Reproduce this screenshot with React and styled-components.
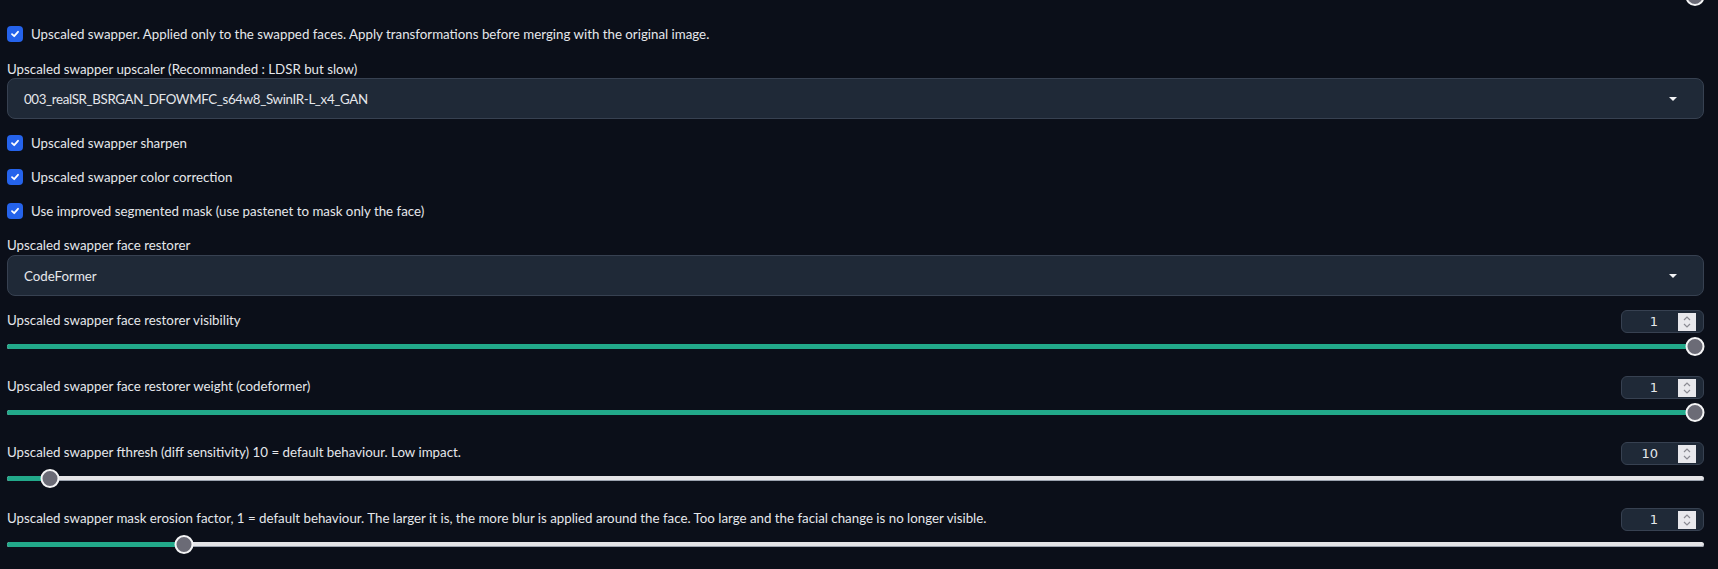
import React from 'react'
import styled, {createGlobalStyle} from 'styled-components'

const GlobalStyle = createGlobalStyle`
    html, body {
        margin: 0;
        padding: 0;
        background: #0b0f19;
    }
    body {
        font-family: Lato, "Liberation Sans", sans-serif;
        font-size: 13.3px;
        color: #e5e7eb;
        overflow: hidden;
    }
`

const Page = styled.div`
    display: flex;
    flex-direction: column;
    padding: 0 14px 0 7px;
    height: 569px;
    overflow: hidden;
`

const CheckRow = styled.label`
    display: flex;
    align-items: center;
    gap: 8px;
    height: 16px;
    margin-top: ${props => props.top}px;
    line-height: 16px;
`

const CheckBox = styled.span`
    width: 16px;
    height: 16px;
    border-radius: 4px;
    background: #2563eb;
    display: flex;
    align-items: center;
    justify-content: center;
    flex-shrink: 0;
`

const FieldLabel = styled.div`
    line-height: 18px;
    height: 18px;
    margin-top: ${props => props.top}px;
    color: #e5e7eb;
`

const Dropdown = styled.div`
    display: flex;
    align-items: center;
    justify-content: space-between;
    box-sizing: border-box;
    height: 41px;
    margin-top: ${props => props.top}px;
    padding: 0 26px 0 16px;
    background: #1f2937;
    border: 1px solid #374151;
    border-radius: 8px;
`

const DropdownValue = styled.span`
    letter-spacing: ${props => props.tight ? '-0.35px' : 'normal'};
`

const Caret = styled.span`
    width: 0;
    height: 0;
    border-left: 4px solid transparent;
    border-right: 4px solid transparent;
    border-top: 4px solid #f3f4f6;
`

const SliderBlock = styled.div`
    display: flex;
    flex-direction: column;
    margin-top: ${props => props.top}px;
`

const SliderHead = styled.div`
    display: flex;
    align-items: center;
    justify-content: space-between;
    height: 23px;
    margin-bottom: 4px;
`

const SliderTitle = styled.span`
    margin-top: -3px;
`

const NumberBox = styled.div`
    display: flex;
    align-items: center;
    justify-content: flex-end;
    box-sizing: border-box;
    width: 83px;
    height: 23px;
    padding: 0 7px 0 0;
    background: #1f2937;
    border: 1px solid #374151;
    border-radius: 6px;
`

const NumberValue = styled.span`
    font-family: "DejaVu Sans", sans-serif;
    font-size: 13px;
    color: #e5e7eb;
    margin-right: 20px;
`

const Spinner = styled.span`
    width: 18px;
    height: 18px;
    background: #e8e8ec;
    display: flex;
    align-items: center;
    justify-content: center;
`

const TrackArea = styled.div`
    position: relative;
    height: 19px;
    margin-top: ${props => props.top || 0}px;
`

const Track = styled.div`
    position: absolute;
    left: 0;
    right: 0;
    top: 7px;
    height: 5px;
    border-radius: 3px;
    background: #e4e4e7;
    box-shadow: inset 0 -1px 0 #9ca3af;
`

const Fill = styled.div`
    position: absolute;
    left: 0;
    top: 7px;
    height: 5px;
    border-radius: 3px;
    background: #22a98a;
`

const Thumb = styled.div`
    position: absolute;
    top: 0;
    width: 19px;
    height: 19px;
    box-sizing: border-box;
    border-radius: 50%;
    background: #6b6b76;
    border: 2px solid #f4f4f5;
    transform: translateX(-50%);
`

const Check = () => (
    <CheckBox>
        <svg width="10" height="10" viewBox="0 0 10 10">
            <path d="M2 5.2 L4.2 7.2 L8 2.8" fill="none" stroke="#fff" strokeWidth="1.8" strokeLinecap="round" strokeLinejoin="round"/>
        </svg>
    </CheckBox>
)

const Slider = ({pct, top}) => {
    // thumb centre runs from r to width - r, like a native range input
    const pos = `calc(9.5px + (100% - 19px) * ${pct / 100})`
    return (
        <TrackArea top={top}>
            <Track/>
            <Fill style={{width: pos}}/>
            <Thumb style={{left: pos}}/>
        </TrackArea>
    )
}

const SliderField = ({label, value, pct, top}) => (
    <SliderBlock top={top}>
        <SliderHead>
            <SliderTitle>{label}</SliderTitle>
            <NumberBox>
                <NumberValue>{value}</NumberValue>
                <Spinner>
                    <svg width="10" height="14" viewBox="0 0 10 14">
                        <path d="M2 5 L5 2 L8 5 M2 9 L5 12 L8 9" fill="none" stroke="#8b8b93" strokeWidth="1.2"/>
                    </svg>
                </Spinner>
            </NumberBox>
        </SliderHead>
        <Slider pct={pct}/>
    </SliderBlock>
)

const sliders = [
    {label: 'Upscaled swapper face restorer visibility', value: 1, pct: 100},
    {label: 'Upscaled swapper face restorer weight (codeformer)', value: 1, pct: 100},
    {label: 'Upscaled swapper fthresh (diff sensitivity) 10 = default behaviour. Low impact.', value: 10, pct: 2},
    {label: 'Upscaled swapper mask erosion factor, 1 = default behaviour. The larger it is, the more blur is applied around the face. Too large and the facial change is no longer visible.', value: 1, pct: 10},
]

export default function App() {
    return (
        <>
            <GlobalStyle/>
            <Page>
                <Slider pct={100} top={-13}/>

                <CheckRow top={20}>
                    <Check/>
                    Upscaled swapper. Applied only to the swapped faces. Apply transformations before merging with the original image.
                </CheckRow>

                <FieldLabel top={18}>Upscaled swapper upscaler (Recommanded : LDSR but slow)</FieldLabel>
                <Dropdown top={0}>
                    <DropdownValue tight>003_realSR_BSRGAN_DFOWMFC_s64w8_SwinIR-L_x4_GAN</DropdownValue>
                    <Caret/>
                </Dropdown>

                <CheckRow top={16}>
                    <Check/>
                    Upscaled swapper sharpen
                </CheckRow>
                <CheckRow top={18}>
                    <Check/>
                    Upscaled swapper color correction
                </CheckRow>
                <CheckRow top={18}>
                    <Check/>
                    Use improved segmented mask (use pastenet to mask only the face)
                </CheckRow>

                <FieldLabel top={17}>Upscaled swapper face restorer</FieldLabel>
                <Dropdown top={1}>
                    <DropdownValue>CodeFormer</DropdownValue>
                    <Caret/>
                </Dropdown>

                {sliders.map((s, i) => (
                    <SliderField key={i} label={s.label} value={s.value} pct={s.pct} top={i === 0 ? 14 : 20}/>
                ))}
            </Page>
        </>
    )
}
